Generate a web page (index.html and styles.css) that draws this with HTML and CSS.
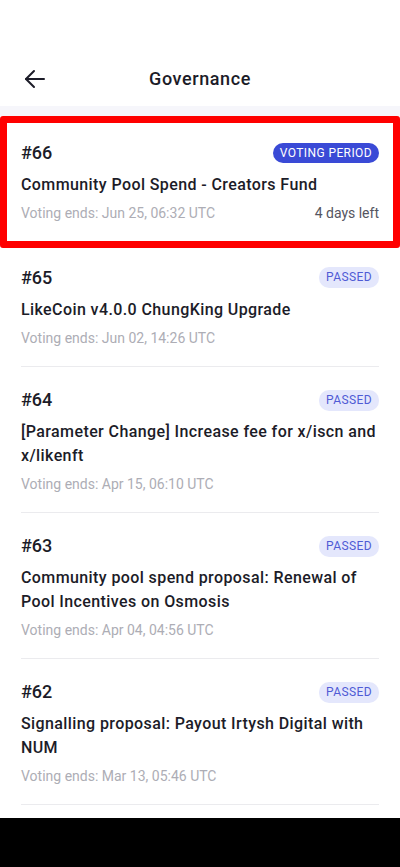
FILE: index.html
```html
<!DOCTYPE html>
<html>
<head>
<meta charset="utf-8">
<link rel="stylesheet" href="styles.css">
</head>
<body>
<div class="screen">
  <div class="status"></div>
  <header class="topbar">
    <svg class="back" width="22" height="20" viewBox="0 0 22 20" fill="none" stroke="#1c1c28" stroke-width="2" stroke-linecap="round" stroke-linejoin="round">
      <path d="M2 10H20"/>
      <path d="M10 2L2 10L10 18"/>
    </svg>
    <h1 class="title">Governance</h1>
  </header>
  <div class="band"></div>
  <main class="list">
    <section class="item item-first">
      <div class="row">
        <span class="num">#66</span>
        <span class="badge badge-voting">VOTING PERIOD</span>
      </div>
      <p class="ptitle">Community Pool Spend - Creators Fund</p>
      <div class="row meta">
        <span class="ends">Voting ends: Jun 25, 06:32 UTC</span>
        <span class="left">4 days left</span>
      </div>
    </section>
    <section class="item">
      <div class="row">
        <span class="num">#65</span>
        <span class="badge badge-passed">PASSED</span>
      </div>
      <p class="ptitle">LikeCoin v4.0.0 ChungKing Upgrade</p>
      <div class="row meta">
        <span class="ends">Voting ends: Jun 02, 14:26 UTC</span>
      </div>
    </section>
    <section class="item">
      <div class="row">
        <span class="num">#64</span>
        <span class="badge badge-passed">PASSED</span>
      </div>
      <p class="ptitle">[Parameter Change] Increase fee for x/iscn and x/likenft</p>
      <div class="row meta">
        <span class="ends">Voting ends: Apr 15, 06:10 UTC</span>
      </div>
    </section>
    <section class="item">
      <div class="row">
        <span class="num">#63</span>
        <span class="badge badge-passed">PASSED</span>
      </div>
      <p class="ptitle">Community pool spend proposal: Renewal of Pool Incentives on Osmosis</p>
      <div class="row meta">
        <span class="ends">Voting ends: Apr 04, 04:56 UTC</span>
      </div>
    </section>
    <section class="item">
      <div class="row">
        <span class="num">#62</span>
        <span class="badge badge-passed">PASSED</span>
      </div>
      <p class="ptitle">Signalling proposal: Payout Irtysh Digital with NUM</p>
      <div class="row meta">
        <span class="ends">Voting ends: Mar 13, 05:46 UTC</span>
      </div>
    </section>
  </main>
  <div class="navbar"></div>
</div>
</body>
</html>
```

FILE: styles.css
```css
*, *::before, *::after { box-sizing: border-box; }
html, body { margin: 0; padding: 0; }
body {
  background: #ffffff;
  font-family: Roboto, "Noto Sans", "Liberation Sans", sans-serif;
  color: #1c1c28;
}
.screen {
  width: 400px;
  height: 867px;
  display: flex;
  flex-direction: column;
  overflow: hidden;
}
.status { height: 51px; flex: none; }
.topbar {
  height: 55px;
  flex: none;
  display: flex;
  align-items: center;
  justify-content: center;
  position: relative;
}
.back {
  position: absolute;
  left: 24px;
  top: 18px;
}
.title {
  margin: 0;
  font-size: 18px;
  font-weight: 500;
  color: #1c1c28;
  letter-spacing: 0.6px;
}
.band {
  height: 10px;
  flex: none;
  background: #f6f6fb;
}
.list {
  flex: 1;
  overflow: hidden;
  padding-top: 4px;
  background: #fff;
  position: relative;
}
.item {
  margin: 0 21px;
  padding: 21px 0 18.5px;
  border-bottom: 1px solid #ebebee;
}
.item-first { padding-bottom: 20.5px; }
.item-first::after {
  content: "";
  position: absolute;
  left: 0;
  right: 0;
  top: 0;
  height: 132px;
  border: 7px solid #ff0000;
  border-radius: 3px;
  pointer-events: none;
}
.row {
  display: flex;
  align-items: center;
  justify-content: space-between;
}
.num {
  font-size: 18px;
  font-weight: 500;
  line-height: 24px;
  color: #1c1c28;
}
.badge {
  font-size: 12px;
  line-height: 20px;
  height: 20px;
  padding: 0 7px;
  border-radius: 10px;
  letter-spacing: 0.4px;
}
.badge-voting {
  background: #3a4ad6;
  color: #ffffff;
}
.badge-passed {
  background: #e4e7fc;
  color: #4f5bd5;
  height: 21px;
  line-height: 21px;
}
.ptitle {
  margin: 8px 0 0;
  font-size: 16px;
  font-weight: 500;
  line-height: 23.5px;
  letter-spacing: 0.4px;
  color: #1c1c28;
}
.meta { margin-top: 6.5px; }
.ends {
  font-size: 14px;
  line-height: 20px;
  color: #adadb5;
}
.left {
  font-size: 14px;
  line-height: 20px;
  color: #55555f;
}
.navbar {
  height: 49px;
  flex: none;
  background: #000;
}
```
